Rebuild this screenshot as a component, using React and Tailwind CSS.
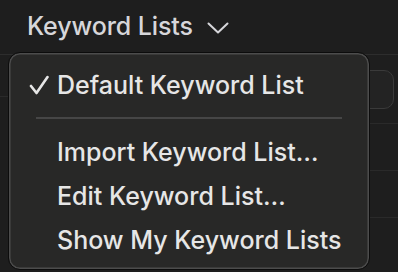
import React from "react";

const items = ["Import Keyword List…", "Edit Keyword List…", "Show My Keyword Lists"];

const App = () => {
    return (
        <div className="relative w-[398px] h-[272px] overflow-hidden bg-[#1e1e1e] font-['Inter',sans-serif]">
            {/* header */}
            <div className="h-[55px] flex items-center gap-[14px] pl-[27px] pb-[1px] border-b border-[#2d2d2d] text-[#d6d6da]">
                <span className="text-[25px] leading-none tracking-[-0.1px] font-[450]">Keyword Lists</span>
                <svg width="22" height="12" viewBox="0 0 22 12" fill="none" className="mt-[3px]">
                    <path d="M1.5 1.5 L11 10.5 L20.5 1.5" stroke="#d6d6da" strokeWidth="2" strokeLinecap="round" strokeLinejoin="round" />
                </svg>
            </div>

            {/* page behind the menu */}
            <div className="flex">
                <div className="w-[40px]">
                    <div className="h-[42px] border-b border-[#2a2a2a]"></div>
                </div>
                <div className="flex-1 flex flex-col">
                    <div className="h-[69px] border-b border-[#2a2a2a] flex items-center justify-end pr-[4px]">
                        <div className="w-[120px] h-[39px] rounded-[10px] bg-[#232323] border border-[#3a3a3a]"></div>
                    </div>
                    <div className="h-[47px] border-b border-[#2a2a2a]"></div>
                    <div className="h-[47px] border-b border-[#2a2a2a]"></div>
                </div>
            </div>

            {/* dropdown menu */}
            <div className="absolute left-[8px] top-[52px] w-[362px] h-[218px] rounded-[12px] border border-[#0c0c0c] bg-[#282827] shadow-[inset_0_0_0_1.5px_#4c4c4c] pt-[10px] text-[#e6e6e6] font-[450]">
                <div className="h-[44px] flex items-center">
                    <span className="w-[47px] flex pl-[20px]">
                        <svg width="20" height="20" viewBox="0 0 20 20" fill="none">
                            <path d="M2 11 L7.5 18 L18.5 2" stroke="#e6e6e6" strokeWidth="2.6" strokeLinecap="round" strokeLinejoin="round" />
                        </svg>
                    </span>
                    <span className="pl-[1px] text-[25px] leading-none">Default Keyword List</span>
                </div>
                <div className="pt-[10px] pb-[11px] px-[27px]">
                    <div className="h-[2px] bg-[#464646]"></div>
                </div>
                {items.map((label) => (
                    <div key={label} className="h-[44px] flex items-center pl-[48px] text-[25px] leading-none">
                        {label}
                    </div>
                ))}
            </div>
        </div>
    );
};

export default App;
